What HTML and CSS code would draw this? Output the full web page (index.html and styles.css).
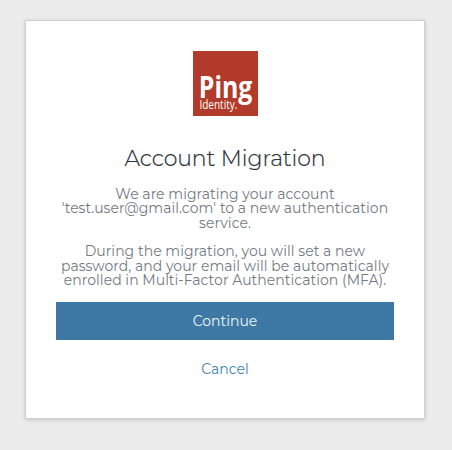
FILE: index.html
```html
<!DOCTYPE html>
<html lang="en">
<head>
<meta charset="utf-8">
<title>Account Migration</title>
<link rel="stylesheet" href="styles.css">
</head>
<body>
<main class="card">
  <svg class="logo" viewBox="0 0 65 65" role="img" aria-label="Ping Identity">
    <rect width="65" height="65" fill="#b23a2a"/>
    <text class="logo-name" x="5.8" y="46.8" textLength="53.6" lengthAdjust="spacingAndGlyphs">Ping</text>
    <text class="logo-sub" x="6.4" y="58.2" textLength="38" lengthAdjust="spacingAndGlyphs">Identity.</text>
  </svg>
  <h1 class="title">Account Migration</h1>
  <p class="message">We are migrating your account<br>'test.user@gmail.com' to a new authentication<br>service.</p>
  <p class="message">During the migration, you will set a new<br>password, and your email will be automatically<br>enrolled in Multi-Factor Authentication (MFA).</p>
  <button class="primary" type="button">Continue</button>
  <a class="cancel">Cancel</a>
</main>
</body>
</html>
```
FILE: styles.css
```css
* { box-sizing: border-box; }
body {
  margin: 0;
  padding: 21px 28px 0 26px;
  height: 450px;
  background: #ececec;
  font-family: Montserrat, Inter, sans-serif;
  font-weight: 400;
}
.card {
  height: 397px;
  padding: 30px 30px 0;
  background: #fff;
  box-shadow: 0 0 0 1px #d0d0d0, 0 1px 4px 1px #c4c4c4;
  display: flex;
  flex-direction: column;
  align-items: center;
}
.logo { width: 65px; height: 65px; display: block; }
.logo-name { font: 700 30px "Open Sans", sans-serif; fill: #fff; }
.logo-sub { font: 400 12.5px "Open Sans", sans-serif; fill: #fff; }
.title {
  margin: 29px 0 14px;
  font-size: 22px;
  line-height: 28px;
  font-weight: 300;
  letter-spacing: -0.08px;
  color: #2b333b;
  -webkit-text-stroke: 0.2px #2b333b;
  white-space: nowrap;
}
.message {
  margin: 0 0 14.5px;
  font-size: 14px;
  line-height: 14.3px;
  letter-spacing: 0.03px;
  color: #737a82;
  text-align: center;
  white-space: nowrap;
}
.primary {
  width: 338px;
  height: 38px;
  flex: none;
  border: 0;
  padding: 0;
  background: #3e79a5;
  color: #f0f5f9;
  font: inherit;
  font-size: 14px;
}
.cancel {
  margin-top: 20px;
  font-size: 14px;
  line-height: 18px;
  color: #4083b0;
}
```
